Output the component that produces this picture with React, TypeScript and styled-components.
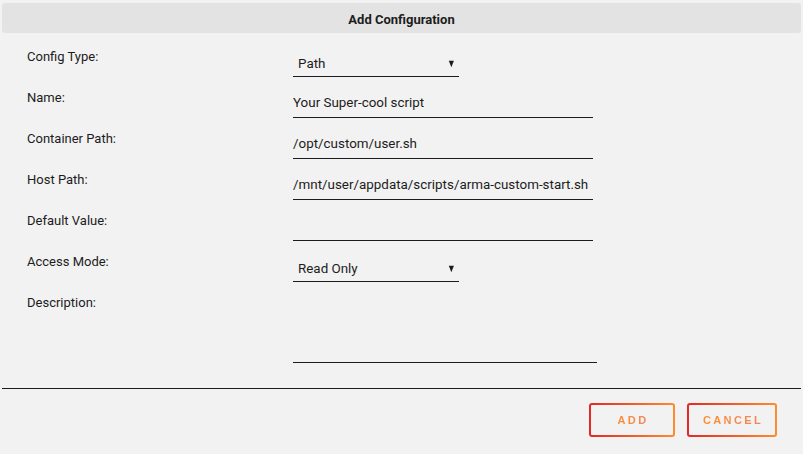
import React from "react";
import styled, { createGlobalStyle } from "styled-components";

const Global = createGlobalStyle`
  html, body {
    margin: 0;
    padding: 0;
    background: #f2f2f2;
  }
  body {
    font-family: Roboto, "Noto Sans", sans-serif;
    color: #1c1c1c;
  }
  * { box-sizing: border-box; }
`;

const Dialog = styled.div`
  width: 803px;
  height: 454px;
  display: flex;
  flex-direction: column;
  padding: 3px 2px 0 2px;
`;

const Header = styled.div`
  height: 30px;
  background: #e3e3e3;
  border-radius: 3px;
  display: flex;
  align-items: center;
  justify-content: center;
  padding-top: 2px;
  font-size: 13px;
  font-weight: 700;
  color: #1c1c1c;
`;

const Form = styled.div`
  display: grid;
  grid-template-columns: 266px 1fr;
  grid-auto-rows: 41px;
  padding: 9px 0 0 25px;
`;

const Label = styled.div`
  font-size: 13px;
  line-height: 16px;
  padding-top: 7px;
  color: #1c1c1c;
`;

const Field = styled.div<{ $tall?: boolean }>`
  display: flex;
  align-items: flex-start;
  ${(p) => (p.$tall ? "grid-row: span 2; height: 75px;" : "")}
`;

const TextInput = styled.input<{ $width: number }>`
  width: ${(p) => p.$width}px;
  height: 35px;
  border: none;
  border-bottom: 1px solid #1c1c1c;
  background: transparent;
  padding: 5px 0 0 0;
  margin: 0;
  font-family: inherit;
  font-size: 13.4px;
  color: #1c1c1c;
  outline: none;
`;

const TextArea = styled.textarea`
  width: 304px;
  height: 75px;
  border: none;
  border-bottom: 1px solid #1c1c1c;
  background: transparent;
  resize: none;
  padding: 0;
  margin: 0;
  font-family: inherit;
  font-size: 13.4px;
  outline: none;
`;

const SelectBox = styled.div`
  width: 166px;
  height: 35px;
  border-bottom: 1px solid #1c1c1c;
  display: flex;
  align-items: center;
  justify-content: space-between;
  padding: 8px 2px 0 5px;
  font-size: 13.4px;
  color: #1c1c1c;
`;

const Arrow = styled.span`
  font-size: 11px;
  line-height: 1;
  transform: scaleX(0.8);
`;

const Divider = styled.hr`
  margin: 18px 0 0 0;
  border: none;
  border-top: 1px solid #1c1c1c;
  height: 0;
`;

const Footer = styled.div`
  display: flex;
  justify-content: flex-end;
  gap: 12px;
  padding: 14px 24px 0 0;
`;

const Button = styled.button<{ $width: number }>`
  width: ${(p) => p.$width}px;
  height: 34px;
  border: 2px solid transparent;
  border-radius: 3px;
  background: linear-gradient(#f2f2f2, #f2f2f2) padding-box,
    linear-gradient(90deg, #e22828, #ff8c2f) border-box;
  display: flex;
  align-items: center;
  justify-content: center;
  padding: 0;
  cursor: pointer;
`;

const ButtonText = styled.span`
  font-family: inherit;
  font-size: 11px;
  font-weight: 700;
  letter-spacing: 2.4px;
  background: linear-gradient(90deg, #ff8c2f, #f2845a);
  -webkit-background-clip: text;
  background-clip: text;
  color: transparent;
  margin-right: -2px;
`;

type Row = { label: string; kind: "select" | "text" | "area"; value?: string };

const rows: Row[] = [
  { label: "Config Type:", kind: "select", value: "Path" },
  { label: "Name:", kind: "text", value: "Your Super-cool script" },
  { label: "Container Path:", kind: "text", value: "/opt/custom/user.sh" },
  { label: "Host Path:", kind: "text", value: "/mnt/user/appdata/scripts/arma-custom-start.sh" },
  { label: "Default Value:", kind: "text", value: "" },
  { label: "Access Mode:", kind: "select", value: "Read Only" },
  { label: "Description:", kind: "area" },
];

export default function App() {
  return (
    <>
      <Global />
      <Dialog>
        <Header>Add Configuration</Header>
        <Form>
          {rows.map((r) => (
            <React.Fragment key={r.label}>
              <Label>{r.label}</Label>
              <Field $tall={r.kind === "area"}>
                {r.kind === "select" && (
                  <SelectBox>
                    <span>{r.value}</span>
                    <Arrow>▼</Arrow>
                  </SelectBox>
                )}
                {r.kind === "text" && (
                  <TextInput $width={300} defaultValue={r.value} readOnly />
                )}
                {r.kind === "area" && <TextArea readOnly />}
              </Field>
            </React.Fragment>
          ))}
        </Form>
        <Divider />
        <Footer>
          <Button $width={86}>
            <ButtonText>ADD</ButtonText>
          </Button>
          <Button $width={90}>
            <ButtonText>CANCEL</ButtonText>
          </Button>
        </Footer>
      </Dialog>
    </>
  );
}
